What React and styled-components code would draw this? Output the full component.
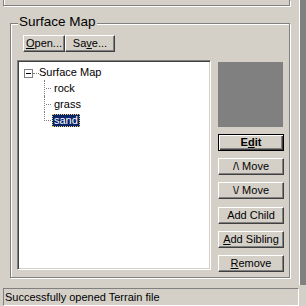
import styled, { createGlobalStyle } from "styled-components";

const Global = createGlobalStyle`
  html, body {
    margin: 0;
    padding: 0;
    background: #d4d0c8;
  }
  body {
    font-family: "Liberation Sans", Arial, sans-serif;
    font-size: 11px;
    color: #000;
  }
  * { box-sizing: border-box; }
`;

const Window = styled.div`
  width: 306px;
  height: 306px;
  display: flex;
  flex-direction: column;
  background: #d4d0c8;
  overflow: hidden;
`;

const Upper = styled.div`
  display: flex;
  flex: 1;
  min-height: 0;
`;

const Pane = styled.div`
  width: 299px;
  display: flex;
  flex-direction: column;
`;

const Edge = styled.div`
  flex: 1;
  margin-bottom: 3px;
  border-left: 1px solid #fff;
  background: #808080;
`;

const Group = styled.div`
  position: relative;
  margin-left: ${(p) => p.$left}px;
  width: ${(p) => p.$width}px;
  border: 1px solid #808080;
  box-shadow: inset 1px 1px 0 #fff, 1px 1px 0 #fff;
`;

const TopGroup = styled(Group)`
  height: 6px;
  border-top: none;
  box-shadow: inset 1px 0 0 #fff, 1px 1px 0 #fff;
`;

const SurfaceGroup = styled(Group)`
  margin-top: 17px;
  height: 255px;
  padding: 11px 0 0 6px;
`;

const Legend = styled.span`
  position: absolute;
  top: -10px;
  left: 7px;
  padding: 0 1px;
  background: #d4d0c8;
  font-size: 13.5px;
  line-height: 16px;
`;

const Toolbar = styled.div`
  display: flex;
  margin-left: 6px;
`;

const Button = styled.button`
  width: ${(p) => p.$width}px;
  height: 17px;
  margin-top: ${(p) => (p.$spaced ? 1 : 0)}px;
  padding: 0;
  font-family: "Liberation Sans", Arial, sans-serif;
  font-size: 11px;
  font-weight: ${(p) => (p.$default ? "bold" : "normal")};
  line-height: 13px;
  color: #000;
  background: #d4d0c8;
  border: 1px solid;
  border-color: ${(p) => (p.$default ? "#000" : "#fff #404040 #404040 #fff")};
  box-shadow: ${(p) =>
    p.$default
      ? "inset 1px 1px 0 #fff, inset -1px -1px 0 #404040, inset -2px -2px 0 #808080"
      : "inset -1px -1px 0 #808080"};
  u { text-decoration: underline; }
`;

const Body = styled.div`
  display: flex;
  gap: 7px;
  margin-top: 8px;
`;

const ListBox = styled.div`
  width: 194px;
  height: 210px;
  padding: 3px 0 0 1px;
  background: #fff;
  border: 1px solid;
  border-color: #808080 #fff #fff #808080;
  box-shadow: inset 1px 1px 0 #404040, inset -1px -1px 0 #d4d0c8;
`;

const RootRow = styled.div`
  display: flex;
  align-items: flex-start;
  height: 16px;
  padding-left: 5px;
  line-height: 16px;
`;

const ExpandBox = styled.span`
  position: relative;
  width: 9px;
  height: 9px;
  margin-top: 5px;
  border: 1px solid #808080;
  background: #fff;
  &::after {
    content: "";
    position: absolute;
    left: 1px;
    top: 3px;
    width: 5px;
    height: 1px;
    background: #000;
  }
`;

const Connector = styled.span`
  width: 6px;
  height: 1px;
  margin-top: 9px;
  border-top: 1px dotted #808080;
`;

const Children = styled.div`
  margin-left: 25px;
`;

const ChildRow = styled.div`
  position: relative;
  display: flex;
  align-items: center;
  height: 16px;
  padding-left: 10px;
  line-height: 16px;
  &::before {
    content: "";
    position: absolute;
    left: 0;
    top: 0;
    height: ${(p) => (p.$last ? 9 : 16)}px;
    border-left: 1px dotted #808080;
  }
  &::after {
    content: "";
    position: absolute;
    left: 2px;
    top: 8px;
    width: 5px;
    border-top: 1px dotted #808080;
  }
`;

const Label = styled.span`
  margin-left: ${(p) => (p.$selected ? -2 : 0)}px;
  padding: 0 ${(p) => (p.$selected ? 2 : 0)}px;
  line-height: 13px;
  color: ${(p) => (p.$selected ? "#fff" : "#000")};
  background: ${(p) => (p.$selected ? "#0a246a" : "transparent")};
  outline: ${(p) => (p.$selected ? "1px dotted #e8d070" : "none")};
  outline-offset: -1px;
`;

const Side = styled.div`
  display: flex;
  flex-direction: column;
  gap: 7px;
  margin-top: 2px;
`;

const Preview = styled.div`
  width: 65px;
  height: 65px;
  background: #808080;
`;

const StatusBar = styled.div`
  width: 296px;
  height: 18px;
  margin-left: 3px;
  padding-left: 1px;
  border: 1px solid;
  border-color: #808080 #fff #fff #808080;
  line-height: 16px;
  font-size: 11px;
  white-space: nowrap;
  overflow: hidden;
`;

const children = ["rock", "grass", "sand"];

export default function App() {
  return (
    <Window>
      <Global />
      <Upper>
        <Pane>
          <TopGroup $left={3} $width={287} />
          <SurfaceGroup $left={10} $width={280}>
            <Legend>Surface Map</Legend>
            <Toolbar>
              <Button $width={42}><u>O</u>pen...</Button>
              <Button $width={50}>Sa<u>v</u>e...</Button>
            </Toolbar>
            <Body>
              <ListBox>
                <RootRow>
                  <ExpandBox />
                  <Connector />
                  <span>Surface Map</span>
                </RootRow>
                <Children>
                  {children.map((name, i) => (
                    <ChildRow key={name} $last={i === children.length - 1}>
                      <Label $selected={name === "sand"}>{name}</Label>
                    </ChildRow>
                  ))}
                </Children>
              </ListBox>
              <Side>
                <Preview />
                <Button $width={66} $default>E<u>d</u>it</Button>
                <Button $width={66}>{"/\\ Move"}</Button>
                <Button $width={66}>{"\\/ Move"}</Button>
                <Button $width={66} $spaced>Add Child</Button>
                <Button $width={66}><u>A</u>dd Sibling</Button>
                <Button $width={66}><u>R</u>emove</Button>
              </Side>
            </Body>
          </SurfaceGroup>
        </Pane>
        <Edge />
      </Upper>
      <StatusBar>Successfully opened Terrain file</StatusBar>
    </Window>
  );
}
